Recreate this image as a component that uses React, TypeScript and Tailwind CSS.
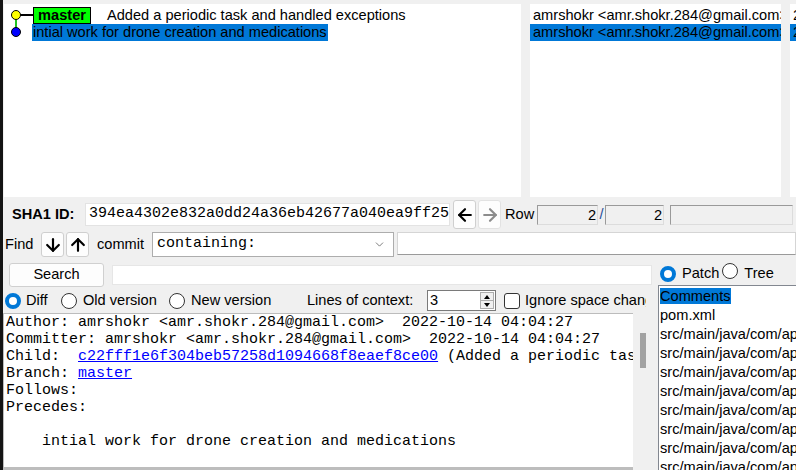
import React from "react";
import { ArrowDown, ArrowUp, ArrowLeft, ArrowRight, ChevronDown } from "lucide-react";

const sans = "font-['Liberation_Sans',Arial,sans-serif]";
const mono = "font-['Liberation_Mono','Courier_New',monospace]";

const Radio = ({ checked }: { checked?: boolean }) =>
  checked ? (
    <span className="box-border inline-block h-[16px] w-[16px] shrink-0 rounded-full border-[4px] border-[#0078d7] bg-white" />
  ) : (
    <span className="box-border inline-block h-[16px] w-[16px] shrink-0 rounded-full border border-[#333333] bg-white" />
  );

const ToolButton = ({ children, disabled, h }: { children: React.ReactNode; disabled?: boolean; h: string }) => (
  <div
    className={`flex w-[23px] shrink-0 items-center justify-center rounded-[3px] border bg-[#fdfdfd] ${h} ${
      disabled ? "border-[#e2e2e2] text-[#8c8c8c]" : "border-[#cfcfcf] text-black"
    }`}
  >
    {children}
  </div>
);

const files = [
  "pom.xml",
  "src/main/java/com/app/drone/DroneApplication.java",
  "src/main/java/com/app/drone/controller/DroneController.java",
  "src/main/java/com/app/drone/dto/DroneDto.java",
  "src/main/java/com/app/drone/entity/Drone.java",
  "src/main/java/com/app/drone/entity/Medication.java",
  "src/main/java/com/app/drone/repository/DroneRepository.java",
  "src/main/java/com/app/drone/service/DroneService.java",
  "src/main/java/com/app/drone/service/DroneServiceImpl.java",
];

export default function App() {
  return (
    <div className={`flex h-[470px] w-[796px] overflow-hidden bg-[#f0f0f0] text-[14.6px] text-black ${sans}`}>
      <div className="w-[3px] shrink-0 bg-[#141414]" />
      <div className="flex min-w-0 flex-1 flex-col">
        {/* commit list panes */}
        <div className="mt-[4px] flex h-[193px] shrink-0">
          <div className="relative ml-[1px] w-[517px] bg-white pt-[3px] leading-[17px]">
            <svg className="absolute left-0 top-0" width="40" height="45">
              <line x1="12" y1="11" x2="30" y2="11" stroke="black" strokeWidth="2" />
              <line x1="12" y1="11" x2="12" y2="28" stroke="#22c422" strokeWidth="2" />
              <circle cx="12" cy="11" r="4.5" fill="#ffff00" stroke="black" strokeWidth="1" />
              <circle cx="12" cy="28" r="4.5" fill="#0000ff" stroke="black" strokeWidth="1" />
            </svg>
            <div className="flex h-[17px] items-center pl-[29px]">
              <span className="box-border flex h-[17px] w-[58px] items-center justify-center border border-black bg-[#00ff00] font-bold">
                master
              </span>
              <span className="ml-[16px] whitespace-nowrap">Added a periodic task and handled exceptions</span>
            </div>
            <div className="flex h-[17px] items-center pl-[28px]">
              <span className="whitespace-nowrap bg-[#0078d7] pl-[1px] pr-[1px]">
                intial work for drone creation and medications
              </span>
            </div>
          </div>
          <div className="ml-[9px] w-[251px] overflow-hidden bg-white pt-[3px] leading-[17px]">
            <div className="h-[17px] whitespace-nowrap pl-[3px]">amrshokr &lt;amr.shokr.284@gmail.com&gt;</div>
            <div className="h-[17px] whitespace-nowrap bg-[#0078d7] pl-[3px]">amrshokr &lt;amr.shokr.284@gmail.com&gt;</div>
          </div>
          <div className="ml-[9px] min-w-0 flex-1 overflow-hidden bg-white pt-[3px] leading-[17px]">
            <div className="h-[17px] whitespace-nowrap pl-[3px]">2022-10-14 04:04:27</div>
            <div className="h-[17px] whitespace-nowrap bg-[#0078d7] pl-[3px]">2022-10-14 04:04:27</div>
          </div>
        </div>

        {/* SHA1 row */}
        <div className="mt-[3px] flex h-[29px] shrink-0 items-center">
          <span className="ml-[9px] w-[73px] shrink-0 font-bold">SHA1 ID:</span>
          <div className={`box-border flex h-[23px] w-[365px] shrink-0 items-center border border-[#e3e3e3] bg-white pl-[3px] text-[15px] ${mono}`}>
            394ea4302e832a0dd24a36eb42677a040ea9ff25
          </div>
          <div className="ml-[3px]">
            <ToolButton h="h-[29px]">
              <ArrowLeft size={20} strokeWidth={2.6} />
            </ToolButton>
          </div>
          <div className="ml-[2px]">
            <ToolButton h="h-[29px]" disabled>
              <ArrowRight size={20} strokeWidth={2.6} />
            </ToolButton>
          </div>
          <span className="ml-[4px] w-[32px] shrink-0">Row</span>
          <div className="box-border h-[20px] w-[61px] shrink-0 border border-[#9a9a9a] border-b-[#dcdcdc] border-r-[#dcdcdc] pr-[1px] text-right leading-[18px]">
            2
          </div>
          <span className="w-[7px] shrink-0 text-center text-[#1f4e9a]">/</span>
          <div className="box-border h-[20px] w-[59px] shrink-0 border border-[#9a9a9a] border-b-[#dcdcdc] border-r-[#dcdcdc] pr-[1px] text-right leading-[18px]">
            2
          </div>
          <div className="ml-[6px] box-border h-[20px] w-[123px] shrink-0 border border-[#9a9a9a] border-b-[#dcdcdc] border-r-[#dcdcdc]" />
        </div>

        {/* Find row */}
        <div className="mt-[3px] flex h-[25px] shrink-0 items-center">
          <span className="ml-[2px] w-[36px] shrink-0">Find</span>
          <ToolButton h="h-[25px]">
            <ArrowDown size={20} strokeWidth={2.6} />
          </ToolButton>
          <div className="ml-[2px]">
            <ToolButton h="h-[25px]">
              <ArrowUp size={20} strokeWidth={2.6} />
            </ToolButton>
          </div>
          <span className="ml-[8px] w-[55px] shrink-0">commit</span>
          <div className={`box-border flex h-[25px] w-[242px] shrink-0 items-center justify-between border border-[#adadad] bg-white pl-[4px] pr-[7px] text-[15px] ${mono}`}>
            <span>containing:</span>
            <ChevronDown size={13} strokeWidth={1.4} className="text-[#555]" />
          </div>
          <div className="ml-[3px] box-border h-[23px] min-w-0 flex-1 self-start border border-[#d5d5d5] border-b-[#9a9a9a] bg-white" />
        </div>

        {/* lower pane */}
        <div className="mt-[6px] flex min-h-0 flex-1">
          <div className="flex w-[649px] shrink-0 flex-col">
            <div className="flex h-[24px] shrink-0 items-center">
              <div className="ml-[6px] box-border flex h-[24px] w-[95px] items-center justify-center rounded-[3px] border border-[#d0d0d0] bg-[#fdfdfd]">
                Search
              </div>
              <div className="ml-[8px] box-border h-[20px] flex-1 border border-[#e6e6e6] bg-white" />
            </div>

            <div className="mt-[3px] flex h-[21px] w-[643px] shrink-0 items-center overflow-hidden whitespace-nowrap">
              <div className="ml-[2px] flex w-[56px] shrink-0 items-center gap-[5px]">
                <Radio checked />
                <span>Diff</span>
              </div>
              <div className="flex w-[108px] shrink-0 items-center gap-[6px]">
                <Radio />
                <span>Old version</span>
              </div>
              <div className="flex w-[138px] shrink-0 items-center gap-[6px]">
                <Radio />
                <span>New version</span>
              </div>
              <span className="w-[120px] shrink-0">Lines of context:</span>
              <div className="box-border flex h-[21px] w-[69px] shrink-0 items-center border border-[#7a7a7a] bg-white">
                <span className="flex-1 pl-[2px]">3</span>
                <div className="mr-[1px] flex h-[17px] w-[14px] flex-col border border-[#adadad] bg-[#f0f0f0]">
                  <div className="flex flex-1 items-center justify-center border-b border-[#adadad]">
                    <span className="h-0 w-0 border-x-[3.5px] border-b-[4px] border-x-transparent border-b-black" />
                  </div>
                  <div className="flex flex-1 items-center justify-center">
                    <span className="h-0 w-0 border-x-[3.5px] border-t-[4px] border-x-transparent border-t-black" />
                  </div>
                </div>
              </div>
              <span className="ml-[8px] box-border inline-block h-[16px] w-[16px] shrink-0 rounded-[3px] border border-[#333333] bg-white" />
              <span className="ml-[5px]">Ignore space change</span>
            </div>

            <div className="mt-[2px] flex min-h-0 flex-1">
              <div className="flex w-[630px] shrink-0 flex-col border-l border-t border-[#bcbcbc] bg-white">
                <div className={`min-h-0 flex-1 overflow-hidden whitespace-pre pl-[2px] text-[15px] leading-[17px] ${mono}`}>
                  <div>Author: amrshokr &lt;amr.shokr.284@gmail.com&gt;  2022-10-14 04:04:27</div>
                  <div>Committer: amrshokr &lt;amr.shokr.284@gmail.com&gt;  2022-10-14 04:04:27</div>
                  <div>
                    Child:  <span className="text-[#0000ff] underline">c22fff1e6f304beb57258d1094668f8eaef8ce00</span> (Added a periodic task and handled exceptions)
                  </div>
                  <div>
                    Branch: <span className="text-[#0000ff] underline">master</span>
                  </div>
                  <div>Follows:</div>
                  <div>Precedes:</div>
                  <div> </div>
                  <div>    intial work for drone creation and medications</div>
                </div>
                <div className="h-[3px] shrink-0 bg-[#bdbdbd]" />
              </div>
              <div className="w-[19px] shrink-0 bg-[#f0f0f0]">
                <div className="ml-[7px] mt-[20px] h-[35px] w-[6px] bg-[#a2a2a2]" />
              </div>
            </div>
          </div>

          <div className="ml-[6px] flex min-w-0 flex-1 flex-col">
            <div className="flex h-[22px] shrink-0 items-center whitespace-nowrap pl-[2px]">
              <Radio checked />
              <span className="ml-[6px]">Patch</span>
              <span className="ml-[3px]">
                <Radio />
              </span>
              <span className="ml-[6px]">Tree</span>
            </div>
            <div className="box-border min-h-0 flex-1 overflow-hidden border-l border-t border-[#828790] bg-white pl-[1px] pt-[1px] leading-[19px]">
              <div className="h-[19px] whitespace-nowrap">
                <span className="bg-[#0078d7]">Comments</span>
              </div>
              {files.map((f, idx) => (
                <div key={idx} className="h-[19px] whitespace-nowrap">
                  {f}
                </div>
              ))}
            </div>
          </div>
        </div>
      </div>
    </div>
  );
}
